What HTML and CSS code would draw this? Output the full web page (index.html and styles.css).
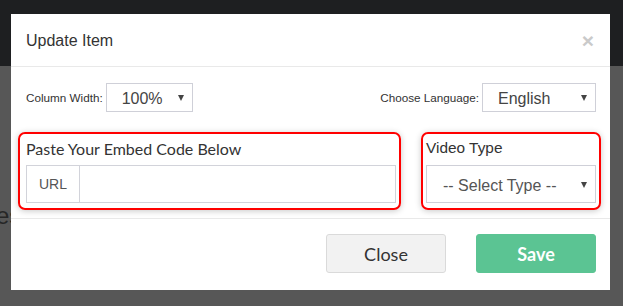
FILE: index.html
```html
<!DOCTYPE html>
<html>
<head lang="en">
    <meta charset="UTF-8">
    <title>Update Item</title>
    <link rel="stylesheet" href="styles.css">
</head>
<body>
    <div class="navbar"></div>
    <div class="page">
        <h2 class="page-title">es</h2>
    </div>

    <div class="modal">
        <div class="modal-header">
            <h4 class="modal-title">Update Item</h4>
            <span class="close">&times;</span>
        </div>
        <div class="modal-body">
            <div class="options">
                <div class="option">
                    <label>Column Width:</label>
                    <div class="select width-select">
                        <span class="value">100%</span>
                        <span class="caret"></span>
                    </div>
                </div>
                <div class="option">
                    <label>Choose Language:</label>
                    <div class="select lang-select">
                        <span class="value">English</span>
                        <span class="caret"></span>
                    </div>
                </div>
            </div>
            <div class="fields">
                <div class="highlight embed">
                    <div class="field-label lato">Paste Your Embed Code Below</div>
                    <div class="input-group">
                        <span class="addon">URL</span>
                        <input type="text" class="url-input">
                    </div>
                </div>
                <div class="highlight type">
                    <div class="field-label">Video Type</div>
                    <div class="select type-select">
                        <span class="value">-- Select Type --</span>
                        <span class="caret"></span>
                    </div>
                </div>
            </div>
        </div>
        <div class="modal-footer">
            <button class="btn btn-close">Close</button>
            <button class="btn btn-save">Save</button>
        </div>
    </div>
</body>
</html>
```

FILE: styles.css
```css
*{
    box-sizing: border-box;
}
body{
    margin: 0;
    height: 306px;
    overflow: hidden;
    background-color: #575757;
    font-family: "Liberation Sans", Arial, sans-serif;
    color: #333;
}
.navbar{
    height: 66px;
    background-color: #1e1f21;
}
.page{
    padding-top: 136px;
}
.page-title{
    margin: 0 0 0 -4px;
    font-size: 24px;
    font-weight: normal;
    color: #262626;
}
.modal{
    position: absolute;
    left: 11px;
    top: 14px;
    width: 599px;
    height: 276px;
    background-color: #fff;
}
.modal-header{
    display: flex;
    justify-content: space-between;
    align-items: center;
    height: 53px;
    padding: 1px 15px 0 15px;
    border-bottom: 1px solid #e9e9e9;
}
.modal-title{
    margin: 0;
    font-size: 16px;
    font-weight: normal;
    color: #333;
}
.close{
    font-size: 21px;
    font-weight: bold;
    line-height: 1;
    color: #cacaca;
    margin-right: 1px;
}
.modal-body{
    padding: 16px 9px 8px 7px;
}
.options{
    display: flex;
    justify-content: space-between;
    padding: 0 5px 0 8px;
}
.option{
    display: flex;
    align-items: center;
}
.option label{
    font-size: 11.7px;
    margin-right: 3px;
}
.select{
    position: relative;
    display: flex;
    align-items: center;
    height: 29px;
    padding: 3px 0 0 15px;
    border: 1px solid #cfd0d8;
    background-color: #fff;
    font-size: 16px;
    color: #444;
}
.caret{
    position: absolute;
    right: 8px;
    top: 11px;
    border-left: 3.5px solid transparent;
    border-right: 3.5px solid transparent;
    border-top: 6px solid #444;
}
.width-select{width: 87px;}
.lang-select{width: 114px;}
.fields{
    display: flex;
    gap: 20px;
    margin-top: 20px;
}
.highlight{
    border: 2px solid #f00;
    border-radius: 7px;
    padding: 0 3px 5px 3px;
    box-shadow: 0 1px 6px rgba(0,0,0,.22);
}
.embed{
    width: 383px;
    padding-left: 6px;
}
.type{
    width: 180px;
}
.field-label{
    height: 31px;
    padding-top: 5px;
    font-size: 15.4px;
    color: #333;
}
.lato{
    font-family: Lato, sans-serif;
    font-size: 16px;
}
.input-group{
    display: flex;
    height: 38px;
    border: 1px solid #d2d3da;
}
.addon{
    display: flex;
    align-items: center;
    justify-content: center;
    width: 53px;
    border-right: 1px solid #d2d3da;
    font-size: 14px;
    color: #555;
}
.url-input{
    flex: 1;
    border: none;
    outline: none;
}
.type-select{
    height: 38px;
    padding-left: 16px;
    color: #555;
}
.type-select .caret{
    top: 16px;
}
.modal-footer{
    display: flex;
    justify-content: flex-end;
    gap: 30px;
    margin-top: 0;
    padding: 15px 14px 16px 0;
    border-top: 1px solid #e9e9e9;
}
.btn{
    width: 120px;
    height: 39px;
    border-radius: 3px;
    font-family: Lato, sans-serif;
    font-size: 18px;
}
.btn-close{
    background-color: #f2f2f2;
    border: 1px solid #dadada;
    color: #333;
}
.btn-save{
    background-color: #5bc493;
    border: 1px solid #5bc493;
    color: #fff;
    font-weight: bold;
}
```
